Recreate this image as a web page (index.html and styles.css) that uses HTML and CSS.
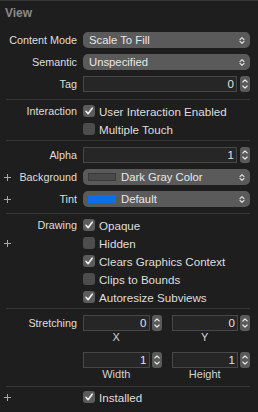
FILE: index.html
```html
<!DOCTYPE html>
<html>
<head>
<meta charset="utf-8">
<link rel="stylesheet" href="styles.css">
</head>
<body>
<div class="panel">
  <div class="header">View</div>

  <section class="sec sec-a">
    <div class="row">
      <div class="lab"><span>Content Mode</span></div>
      <div class="popup"><span>Scale To Fill</span><svg class="pchev" width="6" height="9" viewBox="0 0 6 9"><path d="M1 3.6 L3 1.6 L5 3.6 M1 5.4 L3 7.4 L5 5.4"/></svg></div>
    </div>
    <div class="row">
      <div class="lab"><span>Semantic</span></div>
      <div class="popup"><span>Unspecified</span><svg class="pchev" width="6" height="9" viewBox="0 0 6 9"><path d="M1 3.6 L3 1.6 L5 3.6 M1 5.4 L3 7.4 L5 5.4"/></svg></div>
    </div>
    <div class="row">
      <div class="lab"><span>Tag</span></div>
      <div class="numctl"><div class="field">0</div><svg class="stepper" width="10" height="16" viewBox="0 0 10 16"><rect x="0" y="0" width="10" height="16" rx="3"/><path d="M2.8 6 L5 3.8 L7.2 6 M2.8 10 L5 12.2 L7.2 10"/></svg></div>
    </div>
  </section>
  <div class="sep"></div>

  <section class="sec sec-b">
    <div class="crow">
      <div class="lab"><span>Interaction</span></div>
      <div class="check"><span class="box on"><svg width="12" height="12" viewBox="0 0 12 12"><path d="M3 6.3 L5.1 8.7 L9.2 3.2"/></svg></span><span>User Interaction Enabled</span></div>
    </div>
    <div class="crow">
      <div class="lab"></div>
      <div class="check"><span class="box"></span><span>Multiple Touch</span></div>
    </div>
  </section>
  <div class="sep"></div>

  <section class="sec sec-c">
    <div class="row">
      <div class="lab"><span>Alpha</span></div>
      <div class="numctl"><div class="field">1</div><svg class="stepper" width="10" height="16" viewBox="0 0 10 16"><rect x="0" y="0" width="10" height="16" rx="3"/><path d="M2.8 6 L5 3.8 L7.2 6 M2.8 10 L5 12.2 L7.2 10"/></svg></div>
    </div>
    <div class="row">
      <div class="lab"><svg class="plus" width="7" height="7" viewBox="0 0 7 7"><path d="M3.5 0 V7 M0 3.5 H7"/></svg><span>Background</span></div>
      <div class="popup"><span class="swatch gray"></span><span>Dark Gray Color</span><svg class="pchev" width="6" height="9" viewBox="0 0 6 9"><path d="M1 3.6 L3 1.6 L5 3.6 M1 5.4 L3 7.4 L5 5.4"/></svg></div>
    </div>
    <div class="row">
      <div class="lab"><svg class="plus" width="7" height="7" viewBox="0 0 7 7"><path d="M3.5 0 V7 M0 3.5 H7"/></svg><span>Tint</span></div>
      <div class="popup"><span class="swatch blue"></span><span>Default</span><svg class="pchev" width="6" height="9" viewBox="0 0 6 9"><path d="M1 3.6 L3 1.6 L5 3.6 M1 5.4 L3 7.4 L5 5.4"/></svg></div>
    </div>
  </section>
  <div class="sep"></div>

  <section class="sec sec-d">
    <div class="crow">
      <div class="lab"><span>Drawing</span></div>
      <div class="check"><span class="box on"><svg width="12" height="12" viewBox="0 0 12 12"><path d="M3 6.3 L5.1 8.7 L9.2 3.2"/></svg></span><span>Opaque</span></div>
    </div>
    <div class="crow">
      <div class="lab"><svg class="plus" width="7" height="7" viewBox="0 0 7 7"><path d="M3.5 0 V7 M0 3.5 H7"/></svg></div>
      <div class="check"><span class="box"></span><span>Hidden</span></div>
    </div>
    <div class="crow">
      <div class="lab"></div>
      <div class="check"><span class="box on"><svg width="12" height="12" viewBox="0 0 12 12"><path d="M3 6.3 L5.1 8.7 L9.2 3.2"/></svg></span><span>Clears Graphics Context</span></div>
    </div>
    <div class="crow">
      <div class="lab"></div>
      <div class="check"><span class="box"></span><span>Clips to Bounds</span></div>
    </div>
    <div class="crow">
      <div class="lab"></div>
      <div class="check"><span class="box on"><svg width="12" height="12" viewBox="0 0 12 12"><path d="M3 6.3 L5.1 8.7 L9.2 3.2"/></svg></span><span>Autoresize Subviews</span></div>
    </div>
  </section>
  <div class="sep"></div>

  <section class="sec sec-e">
    <div class="lab stretch-lab"><span>Stretching</span></div>
    <div class="pair">
      <div class="cell">
        <div class="numctl"><div class="field">0</div><svg class="stepper" width="10" height="16" viewBox="0 0 10 16"><rect x="0" y="0" width="10" height="16" rx="3"/><path d="M2.8 6 L5 3.8 L7.2 6 M2.8 10 L5 12.2 L7.2 10"/></svg></div>
        <div class="cap">X</div>
      </div>
      <div class="cell">
        <div class="numctl"><div class="field">0</div><svg class="stepper" width="10" height="16" viewBox="0 0 10 16"><rect x="0" y="0" width="10" height="16" rx="3"/><path d="M2.8 6 L5 3.8 L7.2 6 M2.8 10 L5 12.2 L7.2 10"/></svg></div>
        <div class="cap">Y</div>
      </div>
      <div class="cell">
        <div class="numctl"><div class="field">1</div><svg class="stepper" width="10" height="16" viewBox="0 0 10 16"><rect x="0" y="0" width="10" height="16" rx="3"/><path d="M2.8 6 L5 3.8 L7.2 6 M2.8 10 L5 12.2 L7.2 10"/></svg></div>
        <div class="cap">Width</div>
      </div>
      <div class="cell">
        <div class="numctl"><div class="field">1</div><svg class="stepper" width="10" height="16" viewBox="0 0 10 16"><rect x="0" y="0" width="10" height="16" rx="3"/><path d="M2.8 6 L5 3.8 L7.2 6 M2.8 10 L5 12.2 L7.2 10"/></svg></div>
        <div class="cap">Height</div>
      </div>
    </div>
  </section>
  <div class="sep"></div>

  <section class="sec sec-f">
    <div class="crow">
      <div class="lab"><svg class="plus" width="7" height="7" viewBox="0 0 7 7"><path d="M3.5 0 V7 M0 3.5 H7"/></svg></div>
      <div class="check"><span class="box on"><svg width="12" height="12" viewBox="0 0 12 12"><path d="M3 6.3 L5.1 8.7 L9.2 3.2"/></svg></span><span>Installed</span></div>
    </div>
  </section>
</div>
</body>
</html>
```

FILE: styles.css
```css
html, body {
  margin: 0;
  padding: 0;
  background: #1e1e1e;
}
body {
  font-family: "Liberation Sans", Arial, sans-serif;
  font-size: 11px;
  color: #dedede;
}
.panel {
  width: 258px;
  height: 412px;
  box-sizing: border-box;
  border-top: 1px solid #353535;
  overflow: hidden;
}
.header {
  height: 23px;
  padding-left: 5px;
  display: flex;
  align-items: center;
  font-size: 12px;
  font-weight: bold;
  color: #8b8b8b;
}
.sep {
  height: 1px;
  background: #363636;
  margin: 0 8px 0 6px;
}
.sec {
  display: flex;
  flex-direction: column;
  padding-right: 8px;
}
.sec-a { padding-top: 8px; padding-bottom: 7px; gap: 6px; }
.sec-b { padding-top: 2px; padding-bottom: 2px; }
.sec-c { padding-top: 6px; padding-bottom: 6px; gap: 6px; }
.sec-d { padding-top: 2px; padding-bottom: 2px; }
.sec-f { padding-top: 1px; }

.row, .crow {
  display: grid;
  grid-template-columns: 77px 1fr;
  column-gap: 6px;
  align-items: center;
  height: 16px;
}
.crow { height: 18px; }

.lab {
  display: flex;
  align-items: center;
  justify-content: flex-end;
  white-space: nowrap;
  font-size: 10.8px;
}
.plus {
  margin-left: 4px;
  margin-right: auto;
  stroke: #a8a8a8;
  stroke-width: 1;
  fill: none;
}

.popup {
  height: 16px;
  border-radius: 5px;
  background: #5a5a5a;
  display: flex;
  align-items: center;
  padding-left: 6px;
  padding-right: 5px;
  color: #e8e8e8;
  font-size: 11.3px;
}
.popup .pchev {
  margin-left: auto;
  fill: none;
  stroke: #e8e8e8;
  stroke-width: 1.1;
  stroke-linecap: round;
  stroke-linejoin: round;
}
.swatch {
  width: 28px;
  height: 8px;
  box-sizing: border-box;
  margin-left: -1px;
  margin-right: 5px;
}
.swatch.gray { background: #4a4a4a; border: 1px solid #3a3a3a; }
.swatch.blue { background: #0a70e6; }

.numctl {
  display: flex;
  align-items: center;
  gap: 3px;
  height: 16px;
}
.field {
  flex: 1;
  height: 16px;
  box-sizing: border-box;
  border: 1px solid #474747;
  background: #262626;
  text-align: right;
  padding-right: 2px;
  line-height: 14px;
  color: #e2e2e2;
  font-size: 11.5px;
}
.stepper {
  flex: none;
}
.stepper rect { fill: #5a5a5a; }
.stepper path {
  fill: none;
  stroke: #ececec;
  stroke-width: 1.1;
  stroke-linecap: round;
  stroke-linejoin: round;
}

.check {
  display: flex;
  align-items: center;
  gap: 4px;
  white-space: nowrap;
  font-size: 11.6px;
}
.box {
  width: 12px;
  height: 12px;
  border-radius: 3px;
  background: #4d4d4d;
  flex: none;
  display: flex;
}
.box.on { background: #5c5c5c; }
.box svg path {
  fill: none;
  stroke: #f2f2f2;
  stroke-width: 1.6;
  stroke-linecap: round;
  stroke-linejoin: round;
}

.sec-e {
  display: grid;
  grid-template-columns: 77px 1fr;
  column-gap: 6px;
  padding-top: 6px;
  padding-bottom: 6px;
  align-items: start;
}
.stretch-lab {
  height: 16px;
}
.pair {
  display: grid;
  grid-template-columns: 1fr 1fr;
  column-gap: 10px;
  row-gap: 9px;
}
.cell .numctl { gap: 2px; }
.cap {
  height: 12px;
  line-height: 12px;
  margin-right: 12px;
  text-align: center;
  color: #d4d4d4;
  font-size: 11px;
}
```
